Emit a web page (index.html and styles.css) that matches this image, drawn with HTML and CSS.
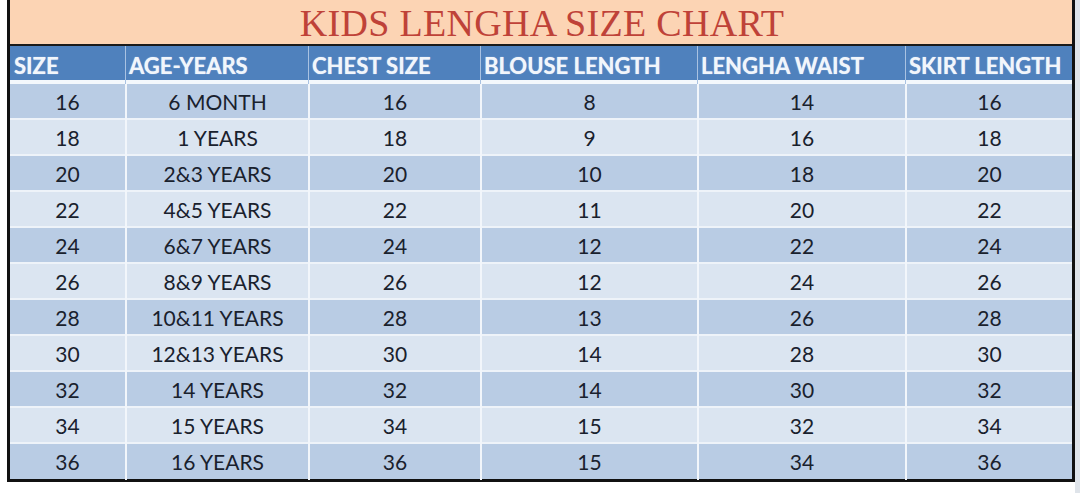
FILE: index.html
```html
<!DOCTYPE html>
<html>
<head>
<meta charset="utf-8">
<link rel="stylesheet" href="styles.css">
</head>
<body>
<div class="sheet">
  <div class="chart">
    <div class="title">KIDS LENGHA SIZE CHART</div>
    <div class="row head">
      <div class="cell">SIZE</div>
      <div class="cell">AGE-YEARS</div>
      <div class="cell">CHEST SIZE</div>
      <div class="cell">BLOUSE LENGTH</div>
      <div class="cell">LENGHA WAIST</div>
      <div class="cell">SKIRT LENGTH</div>
    </div>
    <div class="body">
      <div class="row dark"><div class="cell">16</div><div class="cell">6 MONTH</div><div class="cell">16</div><div class="cell">8</div><div class="cell">14</div><div class="cell">16</div></div>
      <div class="row light"><div class="cell">18</div><div class="cell">1 YEARS</div><div class="cell">18</div><div class="cell">9</div><div class="cell">16</div><div class="cell">18</div></div>
      <div class="row dark"><div class="cell">20</div><div class="cell">2&amp;3 YEARS</div><div class="cell">20</div><div class="cell">10</div><div class="cell">18</div><div class="cell">20</div></div>
      <div class="row light"><div class="cell">22</div><div class="cell">4&amp;5 YEARS</div><div class="cell">22</div><div class="cell">11</div><div class="cell">20</div><div class="cell">22</div></div>
      <div class="row dark"><div class="cell">24</div><div class="cell">6&amp;7 YEARS</div><div class="cell">24</div><div class="cell">12</div><div class="cell">22</div><div class="cell">24</div></div>
      <div class="row light"><div class="cell">26</div><div class="cell">8&amp;9 YEARS</div><div class="cell">26</div><div class="cell">12</div><div class="cell">24</div><div class="cell">26</div></div>
      <div class="row dark"><div class="cell">28</div><div class="cell">10&amp;11 YEARS</div><div class="cell">28</div><div class="cell">13</div><div class="cell">26</div><div class="cell">28</div></div>
      <div class="row light"><div class="cell">30</div><div class="cell">12&amp;13 YEARS</div><div class="cell">30</div><div class="cell">14</div><div class="cell">28</div><div class="cell">30</div></div>
      <div class="row dark"><div class="cell">32</div><div class="cell">14 YEARS</div><div class="cell">32</div><div class="cell">14</div><div class="cell">30</div><div class="cell">32</div></div>
      <div class="row light"><div class="cell">34</div><div class="cell">15 YEARS</div><div class="cell">34</div><div class="cell">15</div><div class="cell">32</div><div class="cell">34</div></div>
      <div class="row dark"><div class="cell">36</div><div class="cell">16 YEARS</div><div class="cell">36</div><div class="cell">15</div><div class="cell">34</div><div class="cell">36</div></div>
    </div>
  </div>
  <div class="below"></div>
</div>
</body>
</html>
```

FILE: styles.css
```css
html, body {
  margin: 0;
  padding: 0;
  background: #ffffff;
}
.sheet {
  width: 1080px;
  height: 493px;
  overflow: hidden;
  background: linear-gradient(to right, #ffffff 0, #ffffff 1075px, #dfe4ea 1075px);
}
.chart {
  margin-left: 7px;
  width: 1062px;
  border-left: 3px solid #111111;
  border-right: 3px solid #111111;
  border-bottom: 3px solid #111111;
  background: #ffffff;
}
.title {
  height: 44px;
  background: #fcd4b4;
  border-bottom: 2px solid #1a1a1a;
  color: #bf4238;
  font-family: "Liberation Serif", serif;
  font-size: 38px;
  line-height: 47px;
  text-align: center;
  letter-spacing: 0.3px;
  padding-left: 2px;
}
.row {
  display: grid;
  grid-template-columns: 115px 183px 172px 217px 208px 167px;
}
.head {
  height: 34px;
  background: #4f81bd;
  border-bottom: 4px solid #f4f8fc;
}
.head .cell {
  color: #f2f6fb;
  font-family: Lato, "Open Sans", sans-serif;
  font-weight: 700;
  font-size: 22px;
  line-height: 39px;
  padding-left: 3px;
  white-space: nowrap;
  text-shadow: 0 0 1px #cfe0f5;
  border-left: 1px solid #a9c2e2;
}
.head .cell:first-child {
  border-left: none;
  padding-left: 4px;
}
.body .row {
  height: 34px;
  border-bottom: 2px solid #eef3f9;
}
.body .row:last-child {
  border-bottom: none;
  height: 35px;
}
.dark {
  background: #b9cce4;
}
.light {
  background: #dbe5f1;
}
.body .cell {
  color: #19212d;
  font-family: Lato, "Open Sans", sans-serif;
  font-size: 21px;
  line-height: 36px;
  text-align: center;
  border-left: 2px solid #f2f6fb;
  white-space: nowrap;
}
.body .cell:first-child {
  border-left: none;
}
.below {
  height: 20px;
}
```
